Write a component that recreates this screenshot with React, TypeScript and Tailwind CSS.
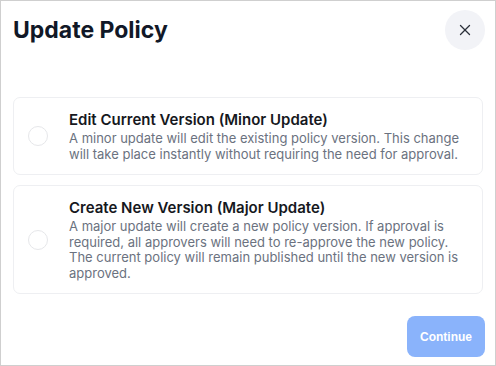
import React, { useState } from 'react';
import { X } from 'lucide-react';

const options = [
  {
    id: 'minor',
    title: 'Edit Current Version (Minor Update)',
    description:
      'A minor update will edit the existing policy version. This change will take place instantly without requiring the need for approval.',
  },
  {
    id: 'major',
    title: 'Create New Version (Major Update)',
    description:
      'A major update will create a new policy version. If approval is required, all approvers will need to re-approve the new policy. The current policy will remain published until the new version is approved.',
  },
];

const App: React.FC = () => {
  const [selected, setSelected] = useState<string | null>(null);

  return (
    <div
      className="w-[496px] h-[366px] bg-white border border-[#cfcfcf] flex flex-col"
      style={{ fontFamily: 'Inter, "Noto Sans", sans-serif' }}
    >
      {/* Header */}
      <div className="flex items-center justify-between pl-[12px] pr-[10px] pt-[9px]">
        <h2 className="text-[23px] leading-[40px] font-bold text-[#111827]">Update Policy</h2>
        <button className="w-10 h-10 rounded-full bg-[#f2f3f7] flex items-center justify-center text-[#2b2f3a]">
          <X className="w-[18px] h-[18px]" strokeWidth={1.75} />
        </button>
      </div>

      {/* Options */}
      <div className="flex flex-col gap-[10px] px-[12px] mt-[47px]">
        {options.map((opt) => (
          <button
            key={opt.id}
            onClick={() => setSelected(opt.id)}
            className="flex items-center text-left border border-[#eeeff2] rounded-[7px] pl-[14px] pr-[12px] py-[12px]"
          >
            <span
              className={`w-5 h-5 shrink-0 rounded-full border ${
                selected === opt.id ? 'border-[#3b82f6] border-[6px]' : 'border-[#e6e7ea]'
              }`}
            />
            <div className="ml-[21px]">
              <div className="text-[15px] leading-[20px] font-semibold text-[#16181d]">{opt.title}</div>
              <div className="text-[13px] leading-[15.5px] text-[#6b7280] mt-[1px]">{opt.description}</div>
            </div>
          </button>
        ))}
      </div>

      {/* Footer */}
      <div className="flex justify-end px-[10px] mt-auto mb-[8px]">
        <button
          disabled={!selected}
          className="w-[78px] h-[41px] rounded-[8px] bg-[#8ab3fb] text-white text-[12px] font-semibold"
          style={{ fontFamily: '"Liberation Sans", Arial, sans-serif' }}
        >
          Continue
        </button>
      </div>
    </div>
  );
};

export default App;
